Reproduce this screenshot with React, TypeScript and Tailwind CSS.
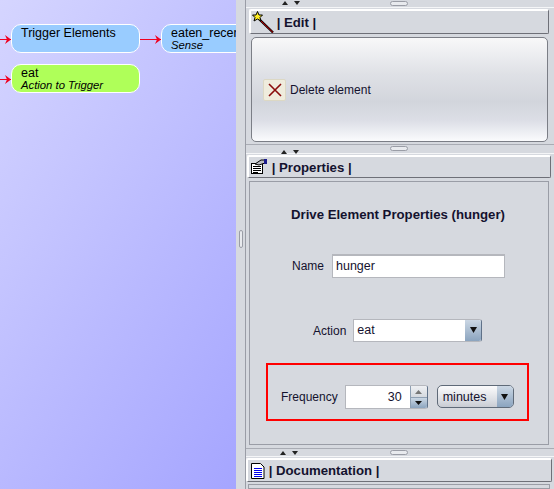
import React from 'react';

const SplitDivider = ({ height, arrowsLeft, line }: { height: number; arrowsLeft: string; line: string }) => (
  <div className={`relative shrink-0 ${line}`} style={{ height }}>
    <div className={`flex items-center gap-[6px] ${arrowsLeft}`}>
      <svg width="6" height="4" viewBox="0 0 6 4"><path d="M3 0L6 4H0z" fill="#222" /></svg>
      <svg width="6" height="4" viewBox="0 0 6 4"><path d="M0 0h6L3 4z" fill="#222" /></svg>
    </div>
    <div className="absolute left-[144px] top-[1px] h-[5px] w-[18px] rounded-[3px] border border-[#9a9da6] bg-[#e8eaee]" />
  </div>
);

const Wand = () => (
  <svg width="24" height="24" viewBox="0 0 24 24" className="-mr-[2px] shrink-0">
    <path d="M8 9L22 22.5" stroke="#000" strokeWidth="2.4" />
    <path d="M8 9L22 22.5" stroke="#d00000" strokeWidth="1" />
    <path d="M6.5 1.5L8 5h3.5L9 7.5l1 3.5-3.5-2-3.5 2 1-3.5L1.5 5H5z" fill="#ffee22" stroke="#000" strokeWidth="1" />
  </svg>
);

const PropsIcon = () => (
  <svg width="18" height="16" viewBox="0 0 18 16" className="shrink-0">
    <rect x="1.5" y="4.5" width="11" height="10" fill="#fff" stroke="#000" />
    <path d="M3 7.5h8M3 9.5h8M3 11.5h8M3 13.5h5" stroke="#000" strokeWidth="1" />
    <path d="M5 5L11 1h4v3l-6 2z" fill="#b8bac0" stroke="#000" strokeWidth="1" />
    <rect x="14" y="0" width="3" height="5" fill="#1a1a8c" />
  </svg>
);

const DocIcon = () => (
  <svg width="14" height="16" viewBox="0 0 14 16" className="shrink-0">
    <path d="M.5.5h9l3.5 3.5v11.5H.5z" fill="#fff" stroke="#000" />
    <path d="M3 5.5h8M3 7.5h8M3 9.5h8M3 11.5h8M3 13.5h8" stroke="#0000ee" strokeWidth="1" />
  </svg>
);

const Header = ({ icon, title, className, titleClass = '' }: { icon: React.ReactNode; title: string; className: string; titleClass?: string }) => (
  <div className={`flex shrink-0 items-center rounded-[2px] border-r border-b border-[#6e7078] border-t-2 border-l-2 border-t-white border-l-white bg-[#d6d9df] ${className}`}>
    {icon}
    <span className={`whitespace-pre text-[13.2px] font-bold text-[#14122e] ${titleClass}`}>{title}</span>
  </div>
);

const ArrowGlyph = ({ up = false, small = false }: { up?: boolean; small?: boolean }) => (
  <svg width="7" height={small ? 4 : 6} viewBox={small ? '0 0 7 4' : '0 0 7 6'}>
    <path d={up ? 'M3.5 0L7 4H0z' : small ? 'M0 0h7L3.5 4z' : 'M0 0h7L3.5 6z'} fill="#111" />
  </svg>
);

const Node = ({ title, sub, color, className }: { title: string; sub?: string; color: string; className: string }) => (
  <div className={`absolute h-[29px] overflow-hidden rounded-[10px] border border-white pl-[9px] leading-none text-black ${color} ${className}`}>
    <div className="mt-[1px] whitespace-nowrap text-[12.5px] leading-[14px]">{title}</div>
    {sub && <div className="-mt-[1px] whitespace-nowrap text-[11.3px] italic leading-[13px]">{sub}</div>}
  </div>
);

const Arrow = ({ x, y, len }: { x: number; y: number; len: number }) => (
  <svg className="absolute" style={{ left: x, top: y }} width={len} height="11" viewBox={`0 0 ${len} 11`}>
    <path d={`M0 5.5H${len}`} stroke="#f00020" strokeWidth="1" />
    <path d={`M${len - 6} 1L${len} 5.5L${len - 6} 10L${len - 4} 5.5z`} fill="#f00020" />
  </svg>
);

export default function App() {
  return (
    <div className="flex h-[489px] w-[554px] overflow-hidden bg-[#d6d9df] font-['Liberation_Sans',Arial,sans-serif] text-[12px] text-[#14122e]">
      {/* graph canvas */}
      <div className="relative h-full w-[236px] shrink-0 overflow-hidden bg-[linear-gradient(125deg,#d5d5ff_0%,#a5a5ff_100%)]">
        <Arrow x={0} y={34} len={11} />
        <Node title="Trigger Elements" color="bg-[#99ccff]" className="left-[11px] top-[24px] w-[129px]" />
        <Arrow x={140} y={34} len={21} />
        <Node title="eaten_recent" sub="Sense" color="bg-[#99ccff]" className="left-[161px] top-[24px] w-[100px]" />
        <Arrow x={0} y={74} len={11} />
        <Node title="eat" sub="Action to Trigger" color="bg-[#afff59]" className="left-[11px] top-[64px] w-[129px]" />
      </div>

      {/* vertical split bar */}
      <div className="flex h-full w-[10px] shrink-0 items-center justify-center border-r border-[#9a9da6] bg-[#d6d9df]">
        <div className="mb-[12px] h-[18px] w-[4px] rounded-[2px] border border-[#9a9da6] bg-[#e8eaee]" />
      </div>

      {/* side panels */}
      <div className="flex h-full min-w-0 flex-1 flex-col">
        <SplitDivider height={8} arrowsLeft="pl-[36px] pt-[1px]" line="border-b border-[#f4f5f7]" />
        <Header icon={<Wand />} title=" | Edit |" titleClass="mt-[2px]" className="ml-[3px] mr-[5px] mt-[1px] h-[25px]" />
        <div className="ml-[5px] mr-[6px] mt-[3px] flex h-[105px] shrink-0 items-center rounded-[5px] border border-[#7b7e86] bg-[linear-gradient(180deg,#f8f8f9_0%,#dfe1e6_35%,#d2d5dc_62%,#dcdee6_80%,#fafbfd_100%)] pl-[11px]">
          <div className="flex h-[22px] w-[23px] items-center justify-center rounded-[2px] border border-[#dcd8c4] bg-[#efecdd]">
            <svg width="14" height="14" viewBox="0 0 14 14"><path d="M1 1L13 13M13 1L1 13" stroke="#8a0c0c" strokeWidth="1.6" /></svg>
          </div>
          <span className="ml-[4px]">Delete element</span>
        </div>
        <SplitDivider height={10} arrowsLeft="pl-[35px] pt-[5px]" line="mt-[2px] border-t border-b border-t-[#a9acb4] border-b-[#f4f5f7]" />
        <Header icon={<PropsIcon />} title=" | Properties |" titleClass="mt-[2px]" className="ml-[1px] mr-[3px] mt-[1px] h-[23px] pl-[1px]" />
        <div className="relative ml-[3px] mr-[5px] mt-[3px] flex h-[264px] shrink-0 flex-col items-start border border-[#9a9da6] bg-[#d6d9df]">
          <div className="mt-[23px] w-full pl-[41px] text-[13.2px] font-bold">Drive Element Properties (hunger)</div>
          <div className="ml-[42px] mt-[29px] flex h-[24px] items-center">
            <span className="mt-[1px]">Name</span>
            <div className="ml-[8px] flex h-[24px] w-[173px] items-center border border-[#b5b7bd] border-t-2 bg-white pl-[3px] text-[12.5px]">hunger</div>
          </div>
          <div className="ml-[63px] mt-[41px] flex h-[23px] items-center">
            <span className="mt-[1px]">Action</span>
            <div className="ml-[7px] flex h-[23px] w-[129px] items-center overflow-hidden rounded-r-[3px] border border-[#b5b7bd] border-r-[#5f7188] bg-white pl-[3px] text-[12.5px]">
              <span className="flex-1">eat</span>
              <div className="flex h-full w-[16px] items-center justify-center bg-[linear-gradient(180deg,#cbd7e4,#8ba4bf)]"><ArrowGlyph /></div>
            </div>
          </div>
          {/* highlight around the frequency row */}
          <div className="absolute left-[16px] top-[181px] flex h-[58px] w-[263px] items-start border-2 border-[#ff0000] pl-[13px] pt-[20px]">
            <span className="flex h-[24px] items-center">Frequency</span>
            <div className="ml-[7px] flex h-[24px] w-[83px] overflow-hidden rounded-r-[3px] border border-[#b5b7bd] border-r-[#5f7188] bg-white">
              <span className="flex flex-1 items-center justify-end pr-[8px] text-[12.5px]">30</span>
              <div className="flex w-[17px] flex-col border-l border-[#8fa0b3]">
                <div className="flex h-1/2 items-center justify-center bg-[linear-gradient(180deg,#eef0f3,#d5d9df)]"><svg width="7" height="4" viewBox="0 0 7 4"><path d="M3.5 0L7 4H0z" fill="#777" /></svg></div>
                <div className="flex h-1/2 items-center justify-center border-t border-[#8fa0b3] bg-[linear-gradient(180deg,#cbd7e4,#8ba4bf)]"><ArrowGlyph small /></div>
              </div>
            </div>
            <div className="ml-[9px] flex h-[23px] w-[77px] overflow-hidden rounded-[5px] border border-[#5f6a78] bg-[linear-gradient(180deg,#fbfbfc,#d9dce2_70%,#c9ccd3)]">
              <span className="flex flex-1 items-center pl-[5px] pt-[1px] text-[12.5px]">minutes</span>
              <div className="flex w-[16px] items-center justify-center bg-[linear-gradient(180deg,#cbd7e4,#8ba4bf)]"><ArrowGlyph /></div>
            </div>
          </div>
        </div>
        <SplitDivider height={9} arrowsLeft="pl-[34px] pt-[2px]" line="mt-[3px] border-t border-b border-t-[#a9acb4] border-b-[#f4f5f7]" />
        <Header icon={<DocIcon />} title=" | Documentation |" className="mr-[2px] mt-[1px] h-[24px] pl-[3px]" />
        <div className="ml-[2px] mr-[4px] mt-[2px] flex-1 border border-[#9a9da6]" />
      </div>
    </div>
  );
}
